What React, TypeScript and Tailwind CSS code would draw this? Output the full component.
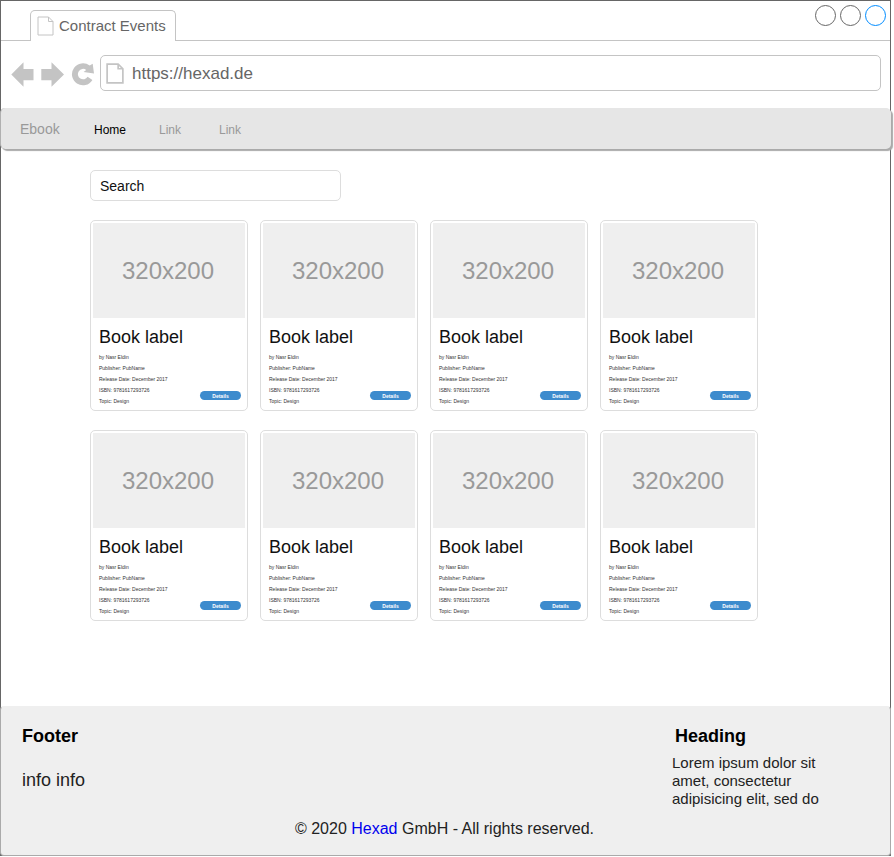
const books = Array.from({ length: 8 }, (_, id) => ({
  id,
  label: "Book label",
  lines: [
    "by Nasr Eldin",
    "Publisher: PubName",
    "Release Date: December 2017",
    "ISBN: 9781617293726",
    "Topic: Design",
  ],
}));

function PageIcon({ className, stroke }: { className: string; stroke: number }) {
  return (
    <svg viewBox="0 0 17 20" className={className} fill="none" stroke="#c4c4c4" strokeWidth={stroke}>
      <path d="M1 1H11.5L16 5.5V19H1ZM11.5 1V5.5H16" />
    </svg>
  );
}

function TabBar() {
  return (
    <div className="flex h-10 items-end">
      <div className="h-px w-[29px] bg-[#c4c4c4]" />
      <div className="flex h-[31px] w-[146px] items-center rounded-t-[5px] border border-b-0 border-[#c4c4c4] pl-[6px]">
        <PageIcon className="h-5 w-[17px]" stroke={1} />
        <span className="ml-[5px] text-[15px] leading-[18px] whitespace-nowrap text-[#666666]">Contract Events</span>
      </div>
      <div className="flex h-10 flex-1 justify-end gap-1 border-b border-[#c4c4c4] pt-[4px] pr-[4px]">
        <span className="h-[21px] w-[21px] rounded-full border border-[#666666]" />
        <span className="h-[21px] w-[21px] rounded-full border border-[#666666]" />
        <span className="h-[21px] w-[21px] rounded-full border border-[#008cff]" />
      </div>
    </div>
  );
}

function AddressBar() {
  return (
    <div className="flex h-[67px] items-start pt-[14px] pl-[10px]">
      <svg viewBox="0 0 84 26" className="mt-[6px] h-[26px] w-[84px]" fill="#c4c4c4">
        <path d="M0.3 13.5 12.5 1.3V8H22.5V19.2H12.5V25.7Z" />
        <path d="M53 13.5 40.5 1.3V8H30.3V19.2H40.5V25.7Z" />
        <path d="M81.4 18.9A11 11 0 1 1 78.7 4.6L81.7 2.8 83 12.4 72.6 10.9 75.2 8.9A5.2 5.2 0 1 0 76.6 15.7Z" />
      </svg>
      <div className="ml-[5px] flex h-9 w-[781px] items-center rounded-[5px] border border-[#c4c4c4] pl-[5px]">
        <PageIcon className="h-[21px] w-[18px]" stroke={1.6} />
        <span className="ml-[8px] pt-[2px] text-[17px] leading-5 text-[#666666]">https://hexad.de</span>
      </div>
    </div>
  );
}

function NavBar() {
  return (
    <nav className="-mx-px flex h-[41px] items-center rounded-[5px] border-l border-[#b0b0b0] bg-[#e6e6e6] pt-[2px] pl-[19px] text-xs text-[#999999] shadow-[2px_2px_1px_#aaaaaa]">
      <span className="w-[74px] pb-px text-sm">Ebook</span>
      <span className="w-[65px] text-black">Home</span>
      <span className="w-[60px]">Link</span>
      <span>Link</span>
    </nav>
  );
}

function BookCard({ label, lines }: { label: string; lines: string[] }) {
  return (
    <article className="h-[191px] w-[158px] rounded-[5px] border border-[#dddddd] px-[2px] pt-[2px]">
      <div className="flex h-[95px] items-center justify-center bg-[#efefef] pr-[2px] text-2xl text-[#999999]">320x200</div>
      <h2 className="mt-[8px] ml-[6px] text-[18px] leading-[22px] text-[#111111]">{label}</h2>
      <div className="mt-[4px] flex items-end justify-between pr-[4px] pl-[6px]">
        <div className="text-[5px] leading-[11px] whitespace-nowrap text-[#333333]">
          {lines.map((line) => (
            <p key={line}>{line}</p>
          ))}
        </div>
        <button className="mb-[7px] -ml-[30px] flex h-[9px] w-[41px] items-center justify-center rounded-[5px] bg-[#3d8bcd] pt-px text-[5px] leading-none font-bold text-white">
          Details
        </button>
      </div>
    </article>
  );
}

function Footer() {
  return (
    <footer className="-mx-px -mb-px flex h-[150px] flex-col rounded-[4px] border border-[#aaaaaa] border-t-[#efefef] bg-[#efefef] text-[#222222]">
      <div className="flex h-[111px] justify-between pt-[18px] pl-[21px]">
        <div>
          <h3 className="text-[18px] leading-[22px] font-bold text-black">Footer</h3>
          <p className="mt-[22px] text-[18px] leading-[22px]">info info</p>
        </div>
        <div className="w-[218px]">
          <h3 className="ml-[3px] text-[18px] leading-[22px] font-bold text-black">Heading</h3>
          <p className="mt-[7px] w-[160px] text-[15px] leading-[18px]">
            Lorem ipsum dolor sit amet, consectetur adipisicing elit, sed do
          </p>
        </div>
      </div>
      <p className="pr-[2px] text-center text-base leading-[22px]">
        © 2020 <a className="text-[#0000ee]">Hexad</a> GmbH - All rights reserved.
      </p>
    </footer>
  );
}

export default function App() {
  return (
    <div className="h-[857px] w-[894px] bg-white font-['Liberation_Sans',Arial,sans-serif]">
      <div className="flex h-[856px] w-[891px] flex-col border border-[#666666]">
        <TabBar />
        <AddressBar />
        <NavBar />
        <main className="flex-1 pt-[21px] pl-[89px]">
          <div className="flex h-[31px] w-[251px] items-center rounded-[5px] border border-[#dddddd] pl-[9px] text-sm text-[#111111]">
            Search
          </div>
          <div className="mt-[19px] grid w-[680px] grid-cols-4 gap-y-[19px]">
            {books.map((book) => (
              <BookCard key={book.id} label={book.label} lines={book.lines} />
            ))}
          </div>
        </main>
        <Footer />
      </div>
    </div>
  );
}
